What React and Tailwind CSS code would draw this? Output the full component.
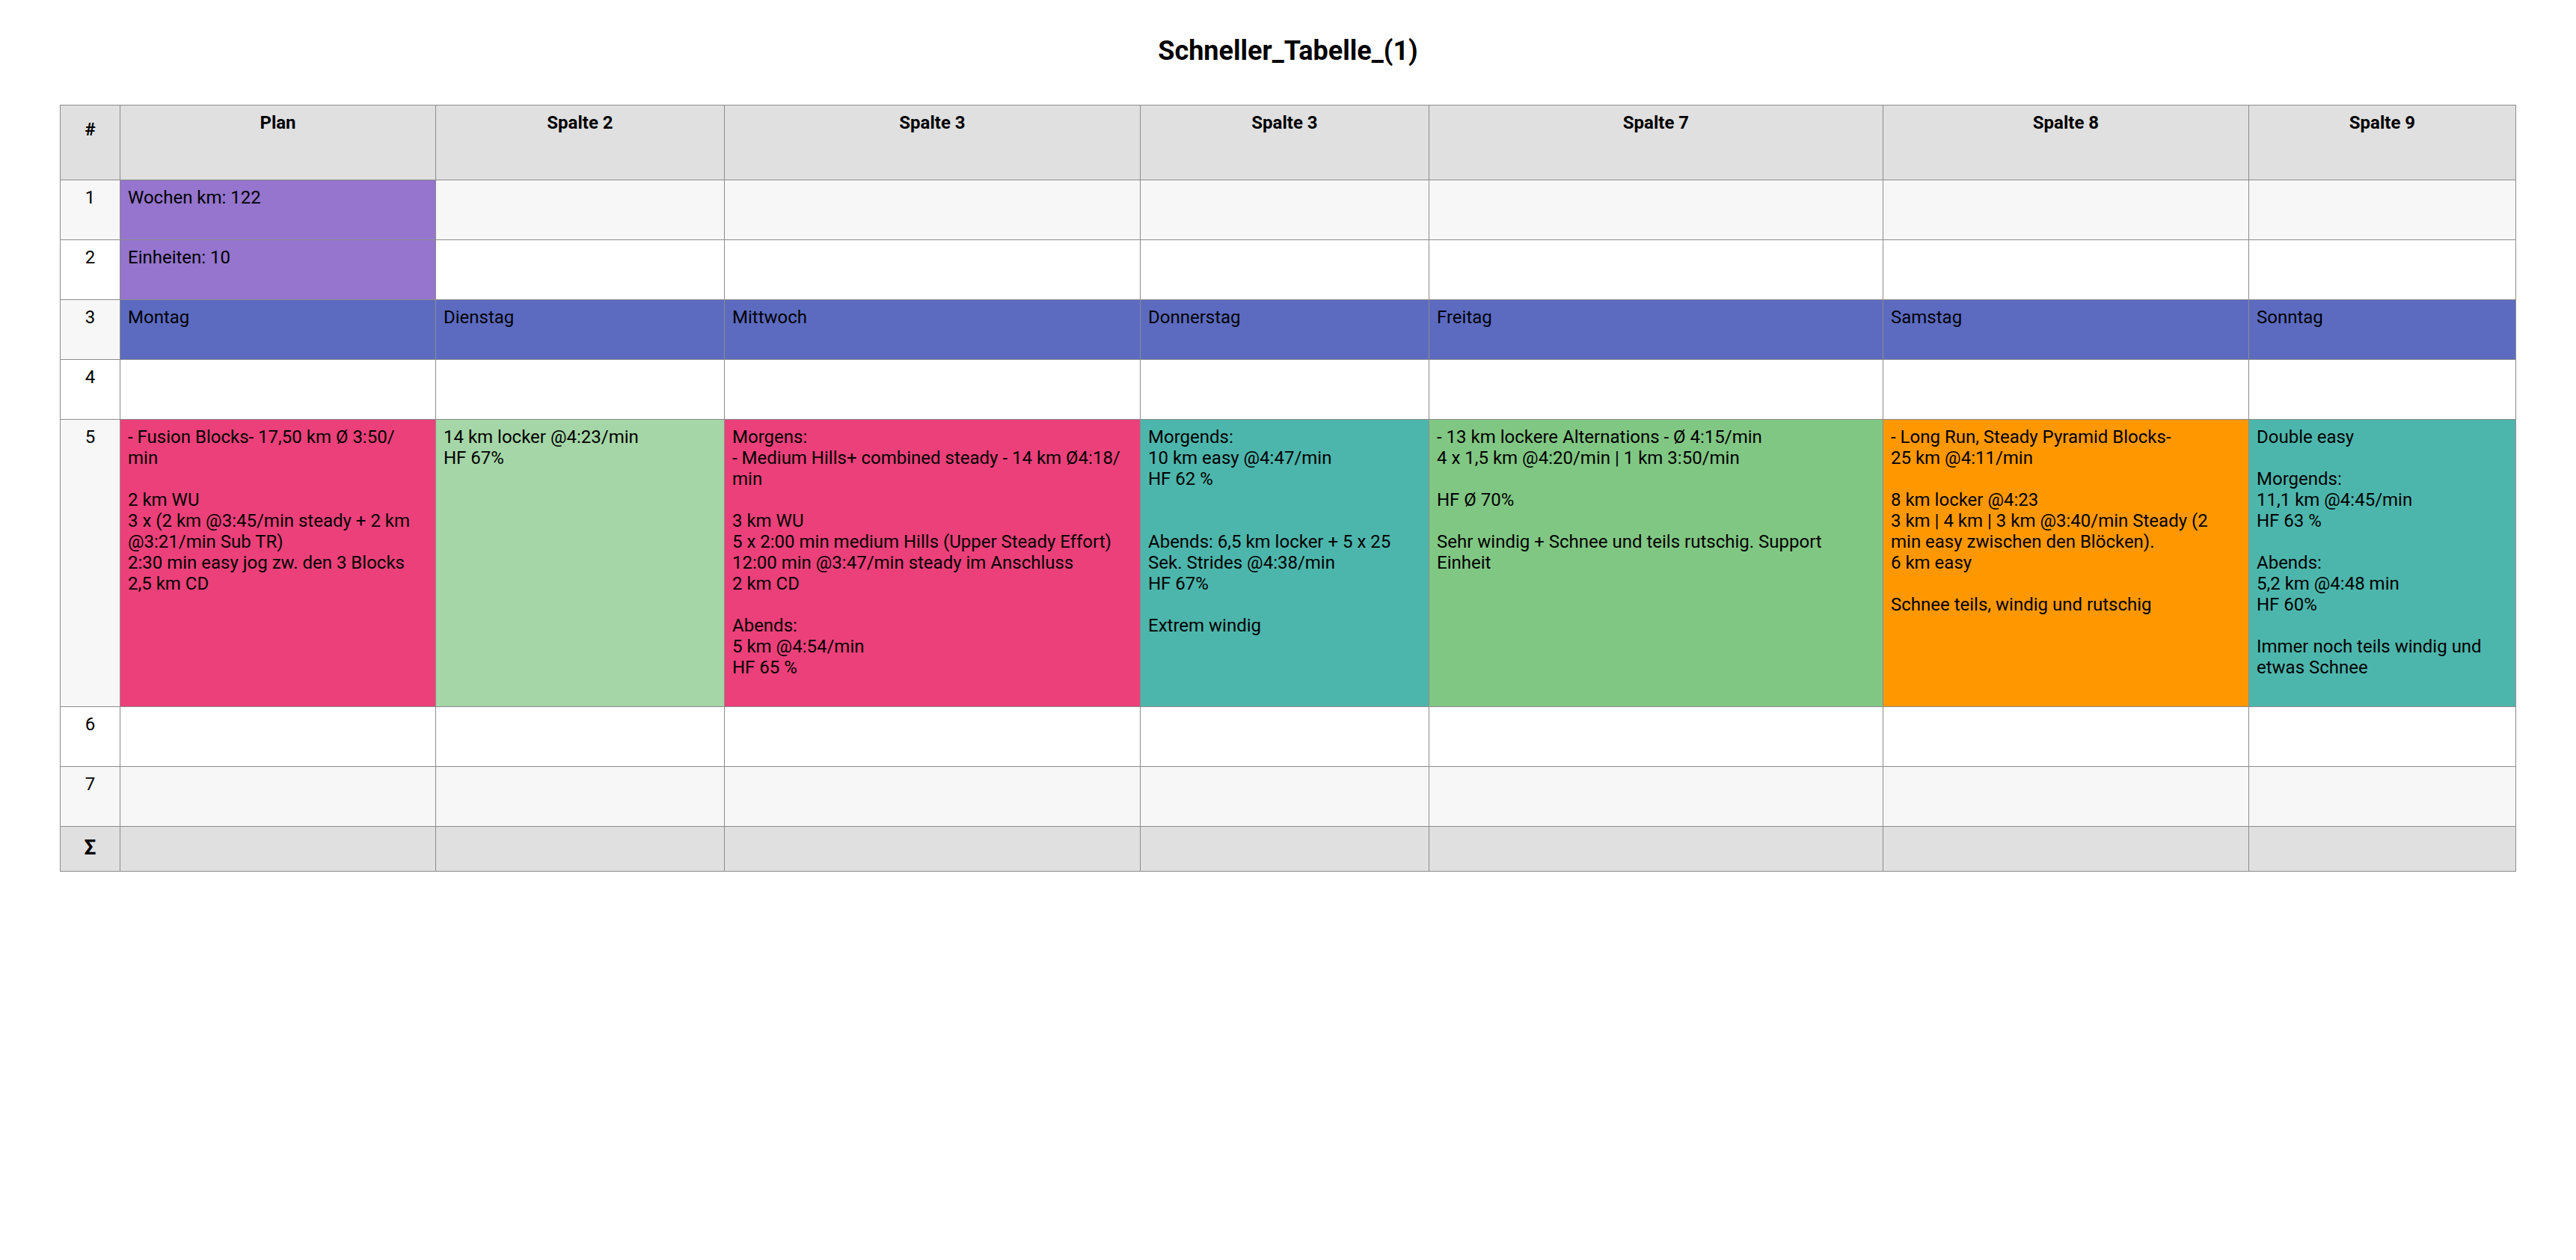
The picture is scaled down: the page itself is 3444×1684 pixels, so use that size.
import React from 'react';

const headers = ['#', 'Plan', 'Spalte 2', 'Spalte 3', 'Spalte 3', 'Spalte 7', 'Spalte 8', 'Spalte 9'];

const purple = 'bg-[#9575cd]';
const indigo = 'bg-[#5c6bc0]';
const pink = 'bg-[#ec407a]';
const mint = 'bg-[#a5d6a7]';
const teal = 'bg-[#4db6ac]';
const green = 'bg-[#81c784]';
const orange = 'bg-[#ff9800]';

const empty = () => Array.from({ length: 7 }, () => ({ text: '' }));

// allow a line break after a slash, like the source sheet does
const soft = (s) => s.replace(/\//g, '/\u200B');

const rows = [
  {
    n: '1',
    cells: [{ text: 'Wochen km: 122', bg: purple }, ...empty().slice(1)],
  },
  {
    n: '2',
    cells: [{ text: 'Einheiten: 10', bg: purple }, ...empty().slice(1)],
  },
  {
    n: '3',
    cells: ['Montag', 'Dienstag', 'Mittwoch', 'Donnerstag', 'Freitag', 'Samstag', 'Sonntag'].map((d) => ({
      text: d,
      bg: indigo,
    })),
  },
  { n: '4', cells: empty() },
  {
    n: '5',
    cells: [
      {
        bg: pink,
        text: '- Fusion Blocks- 17,50 km Ø 3:50/min\n\n2 km WU\n3 x (2 km @3:45/min steady + 2 km @3:21/min Sub TR)\n2:30 min easy jog zw. den 3 Blocks\n2,5 km CD',
      },
      { bg: mint, text: '14 km locker @4:23/min\nHF 67%' },
      {
        bg: pink,
        text: 'Morgens:\n- Medium Hills+ combined steady - 14 km Ø4:18/min\n\n3 km WU\n5 x 2:00 min medium Hills (Upper Steady Effort)\n12:00 min @3:47/min steady im Anschluss\n2 km CD\n\nAbends:\n5 km @4:54/min\nHF 65 %',
      },
      {
        bg: teal,
        text: 'Morgends:\n10 km easy @4:47/min\nHF 62 %\n\n\nAbends: 6,5 km locker + 5 x 25 Sek. Strides @4:38/min\nHF 67%\n\nExtrem windig',
      },
      {
        bg: green,
        text: '- 13 km lockere Alternations - Ø 4:15/min\n4 x 1,5 km @4:20/min | 1 km 3:50/min\n\nHF Ø 70%\n\nSehr windig + Schnee und teils rutschig. Support Einheit',
      },
      {
        bg: orange,
        text: '- Long Run, Steady Pyramid Blocks-\n25 km @4:11/min\n\n8 km locker @4:23\n3 km | 4 km | 3 km @3:40/min Steady (2 min easy zwischen den Blöcken).\n6 km easy\n\nSchnee teils, windig und rutschig',
      },
      {
        bg: teal,
        text: 'Double easy\n\nMorgends:\n11,1 km @4:45/min\nHF 63 %\n\nAbends:\n5,2 km @4:48 min\nHF 60%\n\nImmer noch teils windig und etwas Schnee',
      },
    ],
  },
  { n: '6', cells: empty() },
  { n: '7', cells: empty() },
];

const line = 'border-r border-b border-[#8c8c8c]';

export default function App() {
  return (
    <div className="min-h-screen bg-white px-[80px] pt-[47px] font-['Roboto',sans-serif] text-black">
      <h1 className="mb-[51px] text-center text-[36px] font-bold leading-[42px]">Schneller_Tabelle_(1)</h1>

      <div className="grid grid-cols-[80px_422px_386px_556px_386px_607px_489px_357px] grid-rows-[100px_80px_80px_80px_80px_384px_80px_80px_60px] border-l border-t border-[#8c8c8c] text-[24px] leading-[28px]">
        {/* header */}
        {headers.map((h, i) => (
          <div
            key={`h${i}`}
            className={`${line} bg-[#e0e0e0] text-center font-bold ${i === 0 ? 'pt-[18px]' : 'pt-[9px]'}`}
          >
            {h}
          </div>
        ))}

        {/* body */}
        {rows.map((row, r) => {
          const stripe = r % 2 === 0 ? 'bg-[#f7f7f7]' : 'bg-white';
          return (
            <React.Fragment key={row.n}>
              <div className={`${line} ${stripe} pt-[9px] text-center`}>{row.n}</div>
              {row.cells.map((c, i) => (
                <div
                  key={i}
                  className={`${line} ${c.bg || stripe} whitespace-pre-line break-words pl-[10px] pr-[20px] pt-[9px]`}
                >
                  {soft(c.text)}
                </div>
              ))}
            </React.Fragment>
          );
        })}

        {/* sum row */}
        <div className={`${line} bg-[#e0e0e0] pt-[14px] text-center text-[28px] font-bold`}>Σ</div>
        {Array.from({ length: 7 }).map((_, i) => (
          <div key={`s${i}`} className={`${line} bg-[#e0e0e0]`} />
        ))}
      </div>
    </div>
  );
}
